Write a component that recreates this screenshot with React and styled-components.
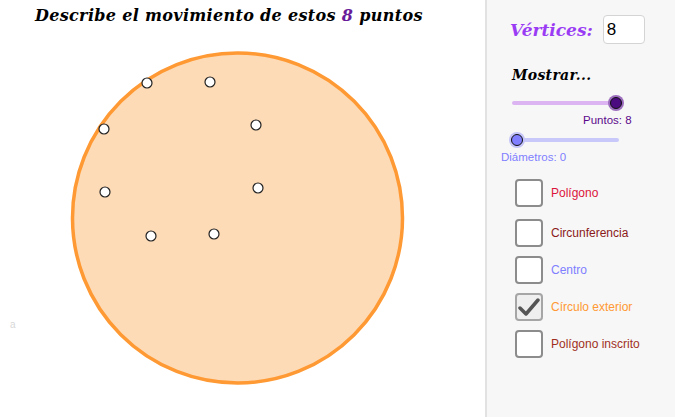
import React, { useState } from 'react';
import styled, { createGlobalStyle } from 'styled-components';

const GlobalStyle = createGlobalStyle`
  html, body {
    margin: 0;
    padding: 0;
    background: #fff;
    font-family: "Liberation Sans", Arial, sans-serif;
  }
`;

const Page = styled.div`
  display: flex;
  width: 675px;
  height: 417px;
  overflow: hidden;
`;

const Canvas = styled.div`
  width: 485px;
  height: 417px;
  display: flex;
  flex-direction: column;
  background: #fff;
`;

const Title = styled.h1`
  margin: 0;
  height: 30px;
  padding: 5px 0 0 35px;
  box-sizing: border-box;
  font-family: "DejaVu Serif", "Liberation Serif", serif;
  font-style: italic;
  font-weight: bold;
  font-size: 16px;
  line-height: 22px;
  letter-spacing: 0.33px;
  color: #000;
  white-space: nowrap;
`;

const Count = styled.span`
  color: #6a1b9a;
`;

const Panel = styled.aside`
  width: 188px;
  height: 417px;
  border-left: 2px solid #e2e2e2;
  background: #f7f7f7;
  display: flex;
  flex-direction: column;
`;

const VertRow = styled.div`
  display: flex;
  align-items: center;
  gap: 10px;
  margin: 15px 0 0 23px;
`;

const VertLabel = styled.span`
  font-family: "DejaVu Serif", "Liberation Serif", serif;
  font-style: italic;
  font-weight: bold;
  font-size: 17px;
  color: #9b3cf5;
`;

const NumBox = styled.div`
  width: 42px;
  height: 29px;
  box-sizing: border-box;
  border: 1px solid #d4d4d4;
  border-radius: 4px;
  background: #fff;
  padding: 4px 0 0 3px;
  font-size: 17px;
  color: #000;
`;

const Heading = styled.div`
  margin: 22px 0 0 25px;
  font-family: "DejaVu Serif", "Liberation Serif", serif;
  font-style: italic;
  font-weight: bold;
  font-size: 14px;
  line-height: 18px;
  letter-spacing: 0.3px;
  color: #000;
`;

const SliderBlock = styled.div`
  display: flex;
  flex-direction: column;
  margin-left: ${p => p.$left}px;
  margin-top: ${p => p.$top}px;
`;

const Track = styled.div`
  position: relative;
  width: ${p => p.$width}px;
  height: 4px;
  border-radius: 2px;
  background: ${p => p.$color};
`;

const Thumb = styled.div`
  position: absolute;
  top: -6px;
  left: ${p => (p.$atEnd ? p.$width - 8 : -8)}px;
  width: 16px;
  height: 16px;
  border-radius: 50%;
  background: ${p => p.$halo};
  display: flex;
  align-items: center;
  justify-content: center;
  &::after {
    content: '';
    width: 10px;
    height: 10px;
    border-radius: 50%;
    border: 1px solid #111;
    background: ${p => p.$color};
  }
`;

const SliderLabel = styled.div`
  margin-top: 9px;
  margin-left: ${p => p.$shift}px;
  font-size: 11.5px;
  line-height: 13px;
  color: ${p => p.$color};
  white-space: nowrap;
`;

const Checks = styled.div`
  display: flex;
  flex-direction: column;
  margin: 15px 0 0 28px;
`;

const CheckRow = styled.label`
  display: flex;
  align-items: center;
  gap: 8px;
  height: 28px;
  margin-bottom: ${p => p.$gap}px;
  cursor: pointer;
`;

const Box = styled.span`
  width: 28px;
  height: 28px;
  box-sizing: border-box;
  border: 2px solid ${p => (p.$checked ? '#a6a6a6' : '#8c8c8c')};
  border-radius: 4px;
  background: ${p => (p.$checked ? '#efefef' : '#fff')};
  display: flex;
  align-items: center;
  justify-content: center;
`;

const CheckText = styled.span`
  font-size: 12px;
  color: ${p => p.$color};
`;

const Slider = ({ left, top, width, color, trackColor, halo, atEnd, label, labelColor, labelShift }) => (
  <SliderBlock $left={left} $top={top}>
    <Track $width={width} $color={trackColor}>
      <Thumb $width={width} $atEnd={atEnd} $color={color} $halo={halo} />
    </Track>
    <SliderLabel $color={labelColor} $shift={labelShift}>{label}</SliderLabel>
  </SliderBlock>
);

const points = [
  [147, 83], [210, 82], [104, 129], [256, 125],
  [105, 192], [258, 188], [151, 236], [214, 234],
];

const options = [
  { id: 1, text: 'Polígono', color: '#dc143c', gap: 12 },
  { id: 2, text: 'Circunferencia', color: '#8b1a1a', gap: 9 },
  { id: 3, text: 'Centro', color: '#7f7fff', gap: 9 },
  { id: 4, text: 'Círculo exterior', color: '#ff9933', gap: 9 },
  { id: 5, text: 'Polígono inscrito', color: '#a0301e', gap: 0 },
];

const App = () => {
  const [checked, setChecked] = useState({ 4: true });

  const toggle = (id) => setChecked({ ...checked, [id]: !checked[id] });

  return (
    <Page>
      <GlobalStyle />
      <Canvas>
        <Title>
          Describe el movimiento de estos <Count>8</Count> puntos
        </Title>
        <svg width="485" height="387" viewBox="0 30 485 387">
          <circle cx="237.5" cy="218" r="165" fill="#fddbb7" stroke="#ff9933" strokeWidth="3.5" />
          {points.map(([x, y]) => (
            <circle key={x + '-' + y} cx={x} cy={y} r="5" fill="#fff" stroke="#222" strokeWidth="1.2" />
          ))}
          <text x="10" y="328" fontSize="10" fill="#d8d8d8" fontFamily="Liberation Sans, sans-serif">a</text>
        </svg>
      </Canvas>
      <Panel>
        <VertRow>
          <VertLabel>Vértices:</VertLabel>
          <NumBox>8</NumBox>
        </VertRow>
        <Heading>Mostrar...</Heading>
        <Slider
          left={25} top={17} width={104} atEnd
          trackColor="#dcb4f2" color="#4c0a80" halo="#9c6cbc"
          label="Puntos: 8" labelColor="#5c0a8c" labelShift={71}
        />
        <Slider
          left={30} top={11} width={102}
          trackColor="#c8c8fa" color="#7f7fff" halo="#c4c4f8"
          label="Diámetros: 0" labelColor="#7f7fff" labelShift={-16}
        />
        <Checks>
          {options.map((opt) => (
            <CheckRow key={opt.id} $gap={opt.gap} onClick={() => toggle(opt.id)}>
              <Box $checked={!!checked[opt.id]}>
                {checked[opt.id] && (
                  <svg width="22" height="20" viewBox="0 0 22 20">
                    <path d="M2 11 L8 17 L20 3" fill="none" stroke="#555" strokeWidth="3.5" strokeLinecap="round" strokeLinejoin="round" />
                  </svg>
                )}
              </Box>
              <CheckText $color={opt.color}>{opt.text}</CheckText>
            </CheckRow>
          ))}
        </Checks>
      </Panel>
    </Page>
  );
};

export default App;
